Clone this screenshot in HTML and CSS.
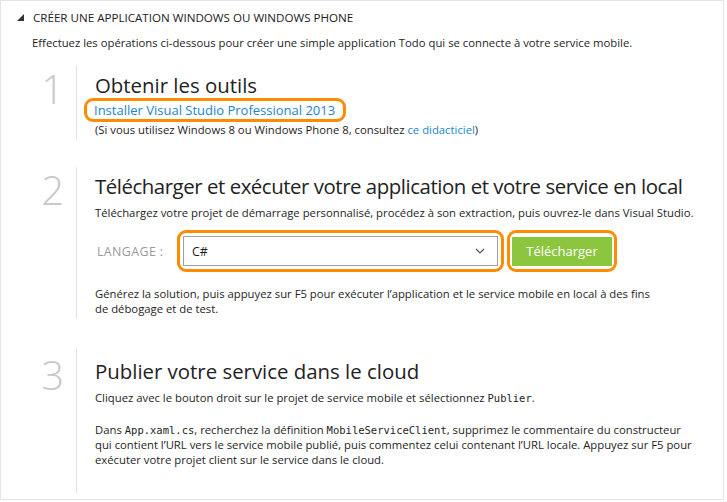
FILE: index.html
```html
<!DOCTYPE html>
<html lang="fr">
<head>
<meta charset="utf-8">
<title>Créer une application Windows</title>
<link rel="stylesheet" href="styles.css">
</head>
<body>
<div class="panel">
  <div class="header">
    <span class="tri"></span>
    <span class="title">CRÉER UNE APPLICATION WINDOWS OU WINDOWS PHONE</span>
  </div>
  <p class="intro">Effectuez les opérations ci-dessous pour créer une simple application Todo qui se connecte à votre service mobile.</p>

  <div class="step step1">
    <div class="num">1</div>
    <div class="body">
      <h2>Obtenir les outils</h2>
      <div class="hl hl-link"><a class="link" href="#">Installer Visual Studio Professional 2013</a></div>
      <p class="note">(Si vous utilisez Windows 8 ou Windows Phone 8, consultez <a class="link" href="#">ce didacticiel</a>)</p>
    </div>
  </div>

  <div class="step step2">
    <div class="num">2</div>
    <div class="body">
      <h2 class="h2-long">Télécharger et exécuter votre application et votre service en local</h2>
      <p class="desc">Téléchargez votre projet de démarrage personnalisé, procédez à son extraction, puis ouvrez-le dans Visual Studio.</p>
      <div class="row">
        <span class="lang">LANGAGE :</span>
        <div class="hl hl-select">
          <div class="select">
            <span>C#</span>
            <svg class="chev" width="10" height="6" viewBox="0 0 10 6"><path d="M1 1 L5 5 L9 1" fill="none" stroke="#555" stroke-width="1.2"/></svg>
          </div>
        </div>
        <div class="hl hl-btn"><button class="btn">Télécharger</button></div>
      </div>
      <p class="para">Générez la solution, puis appuyez sur F5 pour exécuter l’application et le service mobile en local à des fins<br>de débogage et de test.</p>
    </div>
  </div>

  <div class="step step3">
    <div class="num">3</div>
    <div class="body">
      <h2>Publier votre service dans le cloud</h2>
      <p class="desc">Cliquez avec le bouton droit sur le projet de service mobile et sélectionnez <code>Publier</code>.</p>
      <p class="para2">Dans <code>App.xaml.cs</code>, recherchez la définition <code>MobileServiceClient</code>, supprimez le commentaire du constructeur<br>qui contient l’URL vers le service mobile publié, puis commentez celui contenant l’URL locale. Appuyez sur F5 pour<br>exécuter votre projet client sur le service dans le cloud.</p>
    </div>
  </div>
</div>
</body>
</html>
```
FILE: styles.css
```css
* { box-sizing: border-box; }
html, body { margin: 0; padding: 0; background: #fff; }
body {
  font-family: "Open Sans", "Noto Sans", sans-serif;
  color: #1e1e1e;
  font-size: 11.3px;
}
.panel {
  width: 724px;
  height: 500px;
  border: 1px solid #e4e4e4;
  overflow: hidden;
}
.header {
  display: flex;
  align-items: center;
  height: 32px;
  padding-left: 16px;
}
.tri {
  width: 0; height: 0;
  border-left: 7px solid transparent;
  border-bottom: 7px solid #333;
  margin-right: 9px;
}
.title {
  font-size: 11.6px;
  color: #222;
}
.intro {
  margin: 2px 0 0 31px;
  line-height: 16px;
}
.step {
  display: flex;
}
.num {
  width: 75px;
  padding-right: 12px;
  text-align: right;
  font-size: 40px;
  font-weight: 300;
  color: #c8c8c8;
  line-height: 1;
}
.body {
  border-left: 1px solid #e2e2e2;
  padding-left: 18px;
  flex: 1;
  min-width: 0;
}
.step1 { margin-top: 15px; height: 73px; }
.step1 .num { padding-top: 3px; }
.step2 { margin-top: 28px; height: 151px; }
.step2 .num { padding-top: 3px; }
.step3 { margin-top: 30px; height: 145px; }
.step3 .num { padding-top: 7px; }
h2 {
  margin: 0;
  font-size: 20.4px;
  font-weight: 400;
  color: #222;
  line-height: 26px;
  white-space: nowrap;
}
.h2-long { letter-spacing: -0.45px; }
.step1 h2 { padding-top: 6px; }
.step2 h2 { padding-top: 6px; }
.step3 h2 { padding-top: 10px; }
.link { color: #1a86cc; text-decoration: none; }
.hl {
  border: 3px solid #ff8c00;
  border-radius: 9px;
}
.hl-link {
  display: inline-block;
  margin-left: -11px;
  padding: 1px 8px 1px 7px;
  font-size: 13px;
  line-height: 16px;
  height: 24px;
}
.note { margin: 0; line-height: 16px; }
.desc { margin: 6px 0 0 0; line-height: 16px; }
.row {
  display: flex;
  align-items: center;
  margin-top: 9px;
  height: 42px;
}
.lang {
  color: #9a9a9a;
  font-size: 12.4px;
  letter-spacing: 0.4px;
  width: 82px;
  padding-left: 2px;
}
.hl-select { padding: 3px; }
.select {
  width: 315px;
  height: 30px;
  border: 1px solid #a0a0a0;
  display: flex;
  align-items: center;
  justify-content: space-between;
  padding: 0 12px 0 8px;
  font-size: 12.4px;
}
.hl-btn {
  margin-left: 3px;
  padding: 3px 2px;
  height: 42px;
  display: flex;
  align-items: center;
}
.btn {
  width: 100px;
  height: 29px;
  background: #8cc63f;
  color: #fff;
  border: none;
  font-family: inherit;
  font-size: 13px;
  padding: 0;
}
.para { margin: 14px 0 0 0; line-height: 15px; white-space: nowrap; }
.para2 { margin: 16px 0 0 0; line-height: 15px; white-space: nowrap; }
code {
  font-family: "DejaVu Sans Mono", monospace;
  font-size: 10.5px;
  line-height: 1;
}
```
